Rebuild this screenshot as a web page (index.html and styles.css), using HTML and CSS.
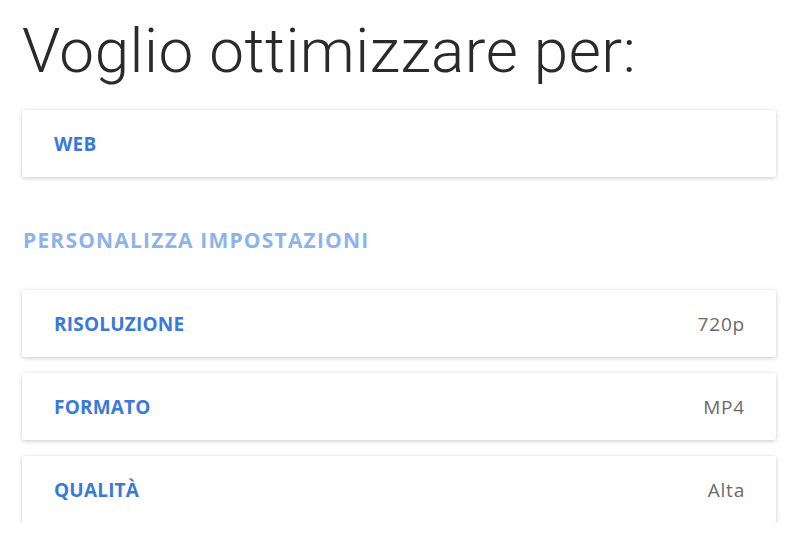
FILE: index.html
```html
<!DOCTYPE html>
<html lang="it">
<head>
  <meta charset="UTF-8">
  <meta name="viewport" content="width=device-width, initial-scale=1.0">
  <title>Ottimizza video</title>
  <link rel="stylesheet" href="styles.css">
</head>
<body>
  <main class="page">
    <h1 class="title">Voglio ottimizzare per:</h1>

    <div class="option-card target">
      <span class="option-label">Web</span>
    </div>

    <h2 class="section-title">Personalizza impostazioni</h2>

    <div class="settings">
      <div class="option-card">
        <span class="option-label">Risoluzione</span>
        <span class="option-value">720p</span>
      </div>
      <div class="option-card">
        <span class="option-label">Formato</span>
        <span class="option-value">MP4</span>
      </div>
      <div class="option-card">
        <span class="option-label">Qualità</span>
        <span class="option-value">Alta</span>
      </div>
    </div>
  </main>
</body>
</html>
```

FILE: styles.css
```css
:root {
  --blue: #3a79d8;
  --blue-light: #8cb4ea;
  --muted: #6a6a6a;
}

body {
  margin: 0;
  background: #fff;
  font-family: 'Open Sans', sans-serif;
  color: #2a2a2a;
}

.page {
  padding: 0 24px 0 22px;
}

.title {
  margin: 0;
  padding: 12px 0 0 0;
  font-family: 'Roboto', sans-serif;
  font-weight: 300;
  font-size: 62px;
  line-height: 78px;
  letter-spacing: 0.5px;
  color: #2a2a2a;
}

.option-card {
  display: flex;
  justify-content: space-between;
  align-items: center;
  height: 67px;
  margin-top: 16px;
  padding: 0 31px 0 32px;
  background: #fff;
  border-radius: 2px;
  box-shadow: 0 1px 4px rgba(0,0,0,0.22);
  box-sizing: border-box;
}

.option-card.target {
  margin-top: 20px;
}

.option-label {
  font-weight: 700;
  font-size: 19px;
  letter-spacing: 0.2px;
  text-transform: uppercase;
  color: var(--blue);
}

.option-value {
  font-size: 19px;
  letter-spacing: 0.8px;
  color: var(--muted);
}

.section-title {
  margin: 46px 0 0 1px;
  font-size: 21px;
  line-height: 34px;
  letter-spacing: 1.2px;
  font-weight: 700;
  text-transform: uppercase;
  color: var(--blue-light);
}

.settings {
  margin-top: 33px;
}

.settings .option-card:first-child {
  margin-top: 0;
}
```
